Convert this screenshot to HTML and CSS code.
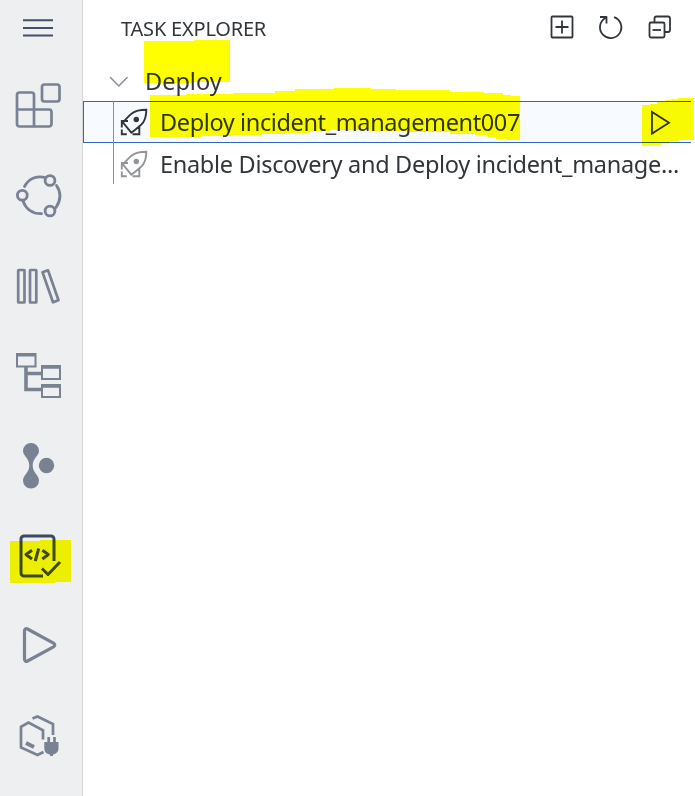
FILE: index.html
```html
<!DOCTYPE html>
<html lang="en">
<head>
<meta charset="utf-8">
<title>Task Explorer</title>
<link rel="stylesheet" href="styles.css">
</head>
<body>
<div class="app">
  <nav class="rail">
    <button class="rail-item menu" aria-label="Menu"><svg viewBox="0 0 82 61"><path d="M23 20.3h30M23 28h30M23 35.5h30"/></svg></button>
    <button class="rail-item" aria-label="Extensions"><svg viewBox="0 61 82 90"><rect x="42" y="84.500" width="17.500" height="17" rx="2.500"/><path d="M19.500 92.500h12a2.500 2.500 0 0 1 2.500 2.500v14.500h15a2.500 2.500 0 0 1 2.500 2.500v12a2.500 2.500 0 0 1-2.500 2.500h-29.500a2.500 2.500 0 0 1-2.500-2.500v-29a2.500 2.500 0 0 1 2.500-2.500zM17 109.500h17v17"/></svg></button>
    <button class="rail-item" aria-label="Source control"><svg viewBox="0 151 82 90"><g stroke-width="2.800"><circle cx="50" cy="180.500" r="4.900"/><circle cx="22.300" cy="195.200" r="4.900"/><circle cx="50" cy="211" r="4.900"/><path d="M24.500 186.500C29 178 37.500 175.500 45 177.500M56.500 185.500C61 192 61 200 56 207.500M23 201C26 209.500 33 214 41.500 213.700"/></g></svg></button>
    <button class="rail-item" aria-label="Library"><svg viewBox="0 241 82 90"><g stroke-width="2.700"><rect x="18.200" y="270" width="6.300" height="32.500" rx=".5"/><rect x="30" y="270" width="6.300" height="32.500" rx=".5"/><path d="M42.500 272.300l5.500-2 10.500 30-5.500 2z"/></g></svg></button>
    <button class="rail-item" aria-label="Outline"><svg viewBox="0 331 82 90"><g stroke-width="2" stroke-linejoin="miter"><path d="M17 354h18.500v12.500H17zM42 366h18v13H42zM42 385h18v12H42z"/><path stroke-width="3.600" stroke-linecap="butt" d="M16 354.800h20M41 367h20M41 386h20M26 367v22.500h15M26 373.500h15"/></g></svg></button>
    <button class="rail-item" aria-label="Connections"><svg viewBox="0 421 82 90"><path class="solid" d="M31 443a8 8 0 0 1 8 8c0 5-6.300 7-6.300 14.500S39 475 39 480.500a8 8 0 0 1-16 0c0-5.500 6.300-7.500 6.300-15S23 456 23 451a8 8 0 0 1 8-8z"/><circle class="solid" cx="46.500" cy="465.500" r="7.700"/></svg></button>
    <button class="rail-item active" aria-label="Task explorer"><svg viewBox="0 511 82 90"><g stroke-width="3"><path stroke-linecap="butt" d="M54 561V539a3 3 0 0 0-3-3H24a3 3 0 0 0-3 3v34a3 3 0 0 0 3 3h19"/><path stroke-linecap="butt" d="M32 550.300l-6 4.200 6 4.500M42.300 550.300l6 4.200-6 4.500M38.700 548.500l-3.500 12.500"/><path stroke-linecap="butt" d="M42 568.500l6 6 12-12.500"/></g></svg></button>
    <button class="rail-item" aria-label="Run"><svg viewBox="0 601 82 90"><path stroke-width="3.200" d="M24.500 631v28c0 2 1.500 2.800 3 2l26-14.200c1.700-1 1.700-2.600 0-3.600l-26-14.200c-1.500-.8-3 0-3 2z"/></svg></button>
    <button class="rail-item" aria-label="Services"><svg viewBox="0 691 82 90"><g stroke-width="2.700" stroke-linecap="butt" stroke-linejoin="miter"><path d="M43 739.500v-9.300l-14.500-7.700-7.500 4.200v20.800l16.500 7.500 6-3M32.500 718.500l5-2 15.500 7.500v11"/><path stroke-width="4" d="M26 743l8 4"/><path d="M48.700 737v6M54.500 737v6"/></g><path class="solid" d="M44.300 742h14.200v6c0 4-2.500 6-5.500 6.500V756h-3v-1.500c-3.500-.5-5.700-2.500-5.700-6.500z"/></svg></button>
  </nav>
  <main class="panel">
    <header class="panel-head">
      <h1>TASK EXPLORER</h1>
      <svg class="actions" width="164" height="61" viewBox="531 0 164 61"><rect x="551.500" y="16.500" width="21" height="21" rx="1"/><path d="M562 20.500v13M555.500 27h13M614 17.200a10.700 10.700 0 1 1-8.500.8M600 17h6.500v6.500"/><path d="M654.500 22v-3.500a2 2 0 0 1 2-2H668a2 2 0 0 1 2 2V30a2 2 0 0 1-2 2h-3.500"/><rect x="649.500" y="22.500" width="15" height="15" rx="1.500"/><path d="M652.500 30h8.500"/></svg>
    </header>
    <div class="row group">
      <svg class="chevron" width="20" height="14" viewBox="109 74 20 14"><path d="M110.500 77.500l8.300 8.500 8.300-8.500"/></svg>
      <span class="label deploy">Deploy</span>
    </div>
    <div class="row task selected">
      <svg class="rocket" width="30" height="30" viewBox="0 0 30 30"><path d="M27.300 2.800C21 2.800 16 4 12.800 6.500 10 8.700 6.700 12.300 4 15.500L12.300 25.700C16.500 22.500 21 19.500 24 15.700 26.500 12 27.300 7 27.300 2.800zM9 14H2.800v6.500M20.300 18.500v8.700H13.500M2.800 22.500v4.700h5"/><circle cx="17.300" cy="12.400" r="1.800"/></svg>
      <span class="label first">Deploy incident_management007</span>
      <svg class="run" width="24" height="28" viewBox="648 108 24 28"><path d="M652 112v21.500l17-10.800z"/></svg>
    </div>
    <div class="row task">
      <svg class="rocket muted" width="30" height="30" viewBox="0 0 30 30"><path d="M27.300 2.800C21 2.800 16 4 12.800 6.500 10 8.700 6.700 12.300 4 15.500L12.300 25.700C16.500 22.500 21 19.500 24 15.700 26.500 12 27.300 7 27.300 2.800zM9 14H2.800v6.500M20.300 18.500v8.700H13.500M2.800 22.500v4.700h5"/><circle cx="17.300" cy="12.400" r="1.800"/></svg>
      <span class="label second">Enable Discovery and Deploy incident_manage...</span>
    </div>
  </main>
  <svg class="marker" viewBox="0 0 695 796"><path d="M144 41h50v-1h36v42h-37v1h-49zM150 95h36v-1h47v-1h42v-2h20v-2h39v-1h37v1h25v1h53v2h35v1h19v2h8v1h9V140H506V139H496V137H488V135H475V134H450V132H410V131H370V130H330V131H310V133H285V134H262V135H232V136H201V137H150zM642 105h8v-1h7v-2h9v-2h5v-1h7v-1h16v42h-15v1h-10v2h-8v2h-9v1h-10zM10 541h30v-1h31v42H55v1H10z"/></svg>
</div>
</body>
</html>
```
FILE: styles.css
```css
* { box-sizing: border-box; }
body { margin: 0; background: #fff; color: #32363a; font-family: "Noto Sans", sans-serif; }
.app { position: relative; display: flex; width: 695px; height: 796px; overflow: hidden; background: #fff; }
.rail { flex: 0 0 83px; display: flex; flex-direction: column; background: #edeff0; border-right: 1px solid #d5d6d7; }
.rail-item { display: block; width: 82px; height: 90px; padding: 0; border: 0; background: none; color: #788292; }
.rail-item svg { display: block; width: 82px; height: 100%; }
.rail-item.menu { height: 61px; color: #464e68; }
.rail-item.menu path { stroke-width: 2; stroke-linecap: butt; }
.rail-item.active { color: #3d4a5e; }
svg { fill: none; stroke: currentColor; stroke-width: 2.7; stroke-linecap: round; stroke-linejoin: round; }
.solid { fill: currentColor; stroke: none; }
.panel { flex: 1; min-width: 0; }
.panel-head { display: flex; justify-content: space-between; height: 61px; padding-left: 38px; }
h1 { margin: 0; font-size: 20px; font-weight: 400; line-height: 57px; letter-spacing: -0.2px; white-space: nowrap; }
.actions { stroke-width: 1.8; stroke-linecap: butt; }
.row { display: flex; align-items: center; width: 608px; height: 41px; }
.group { height: 40px; padding-left: 26px; }
.chevron { color: #8b919b; stroke-width: 1.6; }
.label { font-size: 23.5px; line-height: 40px; white-space: nowrap; }
.deploy { margin-left: 16px; }
.task { position: relative; padding-left: 36px; }
.task::before { content: ""; position: absolute; left: 30px; top: 0; bottom: 0; width: 1px; background: #8c9099; }
.selected { height: 42px; padding-left: 35px; background: #f7faff; border: 1px solid #3468c0; border-right: 0; }
.selected::before { left: 29px; top: -1px; bottom: -1px; }
.rocket { stroke-width: 1.9; stroke-linejoin: miter; stroke-linecap: butt; }
.rocket circle { fill: currentColor; }
.muted { color: #929599; }
.task .label { margin-left: 11px; }
.first { letter-spacing: -0.38px; }
.second { letter-spacing: -0.3px; }
.run { margin-left: auto; margin-right: 19px; stroke-width: 1.8; stroke-linejoin: miter; }
.marker { position: absolute; inset: 0; width: 695px; height: 796px; fill: #ff0; stroke: none; mix-blend-mode: multiply; pointer-events: none; }
```
